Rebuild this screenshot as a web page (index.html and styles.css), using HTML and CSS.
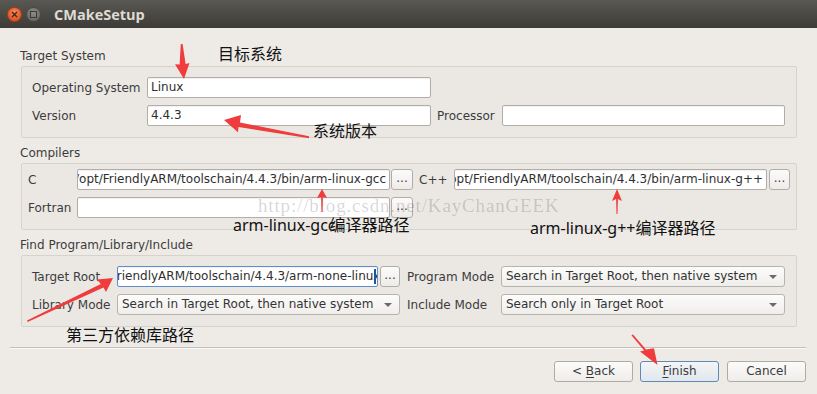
FILE: index.html
```html
<!DOCTYPE html>
<html lang="zh">
	<head>
		<meta charset="utf-8">
		<title>CMakeSetup</title>
		<link rel="stylesheet" href="styles.css">
	</head>
	<body>

		<div class="titlebar">
			<span class="wbtn close">
				<svg width="7" height="7" viewBox="0 0 7 7"><path d="M1 1L6 6M6 1L1 6" stroke="#3b2a22" stroke-width="1.4"/></svg>
			</span>
			<span class="wbtn max">
				<svg width="7" height="7" viewBox="0 0 7 7"><rect x="0.5" y="0.5" width="6" height="6" fill="none" stroke="#3c3b37" stroke-width="1"/></svg>
			</span>
			<span class="title">CMakeSetup</span>
		</div>

		<div class="content">

			<div class="groupTitle">Target System</div>
			<div class="group target">
				<div class="lbl">Operating System</div>
				<div class="field">Linux</div>
				<span></span><span></span>
				<div class="lbl">Version</div>
				<div class="field">4.4.3</div>
				<div class="lbl side">Processor</div>
				<div class="field"></div>
			</div>

			<div class="groupTitle next">Compilers</div>
			<div class="group compilers">
				<div class="lbl">C</div>
				<div class="field path">/opt/FriendlyARM/toolschain/4.4.3/bin/arm-linux-gcc</div>
				<div class="dots">...</div>
				<div class="lbl side">C++</div>
				<div class="field path">/opt/FriendlyARM/toolschain/4.4.3/bin/arm-linux-g++</div>
				<div class="dots">...</div>
				<div class="lbl">Fortran</div>
				<div class="field"></div>
				<div class="dots">...</div>
			</div>

			<div class="groupTitle next">Find Program/Library/Include</div>
			<div class="group find">
				<div class="lbl">Target Root</div>
				<div class="field focus"><span class="scrolled">/opt/FriendlyARM/toolschain/4.4.3/arm-none-linux-gnueabi</span><i class="caret"></i></div>
				<div class="dots">...</div>
				<div class="lbl side">Program Mode</div>
				<div class="combo">Search in Target Root, then native system</div>
				<div class="lbl">Library Mode</div>
				<div class="combo wide">Search in Target Root, then native system</div>
				<div class="lbl side">Include Mode</div>
				<div class="combo">Search only in Target Root</div>
			</div>

		</div>

		<div class="footer">
			<div class="sep"></div>
			<div class="buttons">
				<div class="btn">&lt; <u>B</u>ack</div>
				<div class="btn default"><u>F</u>inish</div>
				<div class="btn cancel">Cancel</div>
			</div>
		</div>

		<!-- annotations drawn over the dialog -->
		<div class="notes">
			<div class="mark">http://blog.csdn.net/KayChanGEEK</div>
			<div class="note n1">目标系统</div>
			<div class="note n2">系统版本</div>
			<div class="note n3">arm-linux-gcc<span class="tight">编译器路径</span></div>
			<div class="note n4">arm-linux-g++编译器路径</div>
			<div class="note n5">第三方依赖库路径</div>
			<svg class="arrows" width="817" height="394" viewBox="0 0 817 394">
				<g fill="#ef3c3c">
					<polygon points="180.8,44 182.6,44 185.6,64 189.5,63 184,79 175,64.2 179.6,64.4"/>
					<polygon points="224,120 241,115 240,122.5 309,136.3 309,138.2 238.5,127 238,132.3"/>
					<polygon points="322,189 327,198 322.9,197 322.5,212 321.5,212 321.1,197 317,198"/>
					<polygon points="617,189 622,201 617.9,199 617.5,214 616.5,214 616.1,199 612,201"/>
					<polygon points="113,278 106,292 103.5,287.5 27.6,322 27,320.4 100.8,284 97,279.5"/>
					<polygon points="631.4,335.2 633,334.4 646,349.4 654,348.3 657.5,365 640,351.5 644.2,350.6"/>
				</g>
			</svg>
		</div>

	</body>
</html>
```

FILE: styles.css
```css
body{
	margin: 0;
	padding: 0;
	width: 817px;
	height: 394px;
	position: relative;
	overflow: hidden;
	background-color: #eeebe7;
	font-family: "DejaVu Sans", sans-serif;
	font-size: 12px;
	color: #3c3c3c;
}

/* window title bar */
.titlebar{
	height: 28px;
	display: flex;
	align-items: center;
	padding-left: 7px;
	background: linear-gradient(#5a5853, #3c3b37);
}

.wbtn{
	width: 15px;
	height: 15px;
	box-sizing: border-box;
	border-radius: 50%;
	margin-right: 4px;
	display: flex;
	align-items: center;
	justify-content: center;
}

.close{
	background: radial-gradient(circle at 50% 35%, #f68b5c, #e1521f 75%);
	border: 1px solid #a9401b;
}

.max{
	background: radial-gradient(circle at 50% 35%, #8e8c86, #6c6a65 75%);
	border: 1px solid #4c4a46;
}

.title{
	margin-left: 9px;
	font-family: "Open Sans", sans-serif;
	font-weight: 700;
	font-size: 14.5px;
	color: #dfdbd2;
}

/* group boxes */
.content{
	padding: 20px 20px 0 21px;
}

.groupTitle{
	height: 16px;
	line-height: 16px;
	margin: 0 0 2px -1px;
}

.groupTitle.next{
	margin-top: 7px;
}

.group{
	display: grid;
	grid-auto-rows: 21px;
	row-gap: 7px;
	align-items: center;
	border: 1px solid #d6d2cc;
	border-radius: 2px;
	background-color: #ebe8e4;
}

.target{
	grid-template-columns: 115px 284px 71px 283px;
	padding: 10px 11px 11px 10px;
}

.compilers{
	grid-template-columns: 49px 313px 23px 41px 313px 23px;
	padding: 5px 6px 11px 6px;
}

.find{
	grid-template-columns: 85px 261px 22px 101px 284px;
	padding: 10px 11px 11px 10px;
}

.lbl{
	white-space: nowrap;
}

.side{
	padding-left: 6px;
}

.find .side{
	padding-left: 7px;
}

.field{
	height: 21px;
	box-sizing: border-box;
	border: 1px solid #b2aea7;
	border-radius: 2px;
	background-color: #fff;
	box-shadow: inset 0 1px 1px rgba(0,0,0,0.06);
	padding: 0 3px;
	line-height: 19px;
	white-space: nowrap;
	overflow: hidden;
	color: #2f2f2f;
}

.path{
	display: flex;
	justify-content: flex-end;
}

.focus{
	position: relative;
	border-color: #5b8fcf;
}

.scrolled{
	display: inline-block;
	margin-left: -38px;
}

.caret{
	position: absolute;
	right: 1px;
	top: 2px;
	width: 2px;
	height: 15px;
	background-color: #24549a;
}

.dots{
	height: 21px;
	box-sizing: border-box;
	margin-left: 1px;
	border: 1px solid #b2aea7;
	border-radius: 3px;
	background: linear-gradient(#fbfbfa, #eeece9);
	text-align: center;
	line-height: 17px;
}

.compilers .dots:nth-child(6){
	margin-left: 2px;
}

.find .dots{
	margin-left: 2px;
}

.combo{
	position: relative;
	height: 21px;
	box-sizing: border-box;
	border: 1px solid #b7b3ad;
	border-radius: 3px;
	background: linear-gradient(#fcfcfb, #f0eeeb);
	padding-left: 4px;
	line-height: 19px;
	white-space: nowrap;
	color: #333;
}

.combo.wide{
	grid-column: span 2;
}

.combo::after{
	content: "";
	position: absolute;
	right: 7px;
	top: 8px;
	border-left: 4px solid transparent;
	border-right: 4px solid transparent;
	border-top: 4px solid #6a6a6a;
}

/* bottom buttons */
.footer{
	padding: 0 11px 0 10px;
}

.sep{
	margin-top: 20px;
	border-top: 1px solid #c4c0ba;
	border-bottom: 1px solid #faf9f7;
}

.buttons{
	display: flex;
	justify-content: flex-end;
	gap: 7px;
	margin-top: 12px;
}

.btn{
	width: 79px;
	height: 21px;
	box-sizing: border-box;
	border: 1px solid #b0aca5;
	border-radius: 3px;
	background: linear-gradient(#fbfbfa, #efedea);
	text-align: center;
	line-height: 19px;
	color: #3c3c3c;
}

.btn.default{
	border-color: #5f8ab5;
	background: linear-gradient(#f3f5f7, #e1e7ed);
}

.btn.cancel{
	margin-left: 1px;
}

.btn u{
	text-underline-offset: 2px;
}

/* annotation layer */
.notes{
	position: absolute;
	left: 0;
	top: 0;
	width: 817px;
	height: 394px;
	pointer-events: none;
}

.arrows{
	position: absolute;
	left: 0;
	top: 0;
}

.note{
	position: absolute;
	font-family: "Noto Sans", "Noto Sans CJK SC", sans-serif;
	font-size: 16px;
	line-height: 16px;
	color: #111;
	white-space: nowrap;
}

.n1{ left: 218px; top: 46px; }
.n2{ left: 313px; top: 123px; }
.n3{ left: 233px; top: 217px; }
.n4{ left: 530px; top: 220px; }
.n5{ left: 66px; top: 327px; }

.tight{
	margin-left: -6px;
}

.mark{
	position: absolute;
	left: 258px;
	top: 196px;
	font-family: "Liberation Serif", serif;
	font-size: 19px;
	line-height: 20px;
	letter-spacing: 0.85px;
	color: rgba(0,0,0,0.17);
	white-space: nowrap;
}
```
